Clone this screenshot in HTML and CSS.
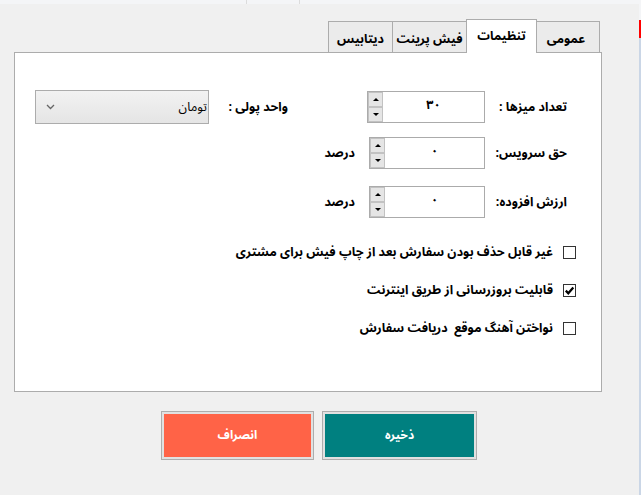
FILE: index.html
```html
<!DOCTYPE html>
<html lang="fa">
<head>
<meta charset="utf-8">
<title>تنظیمات</title>
<link rel="stylesheet" href="styles.css">
</head>
<body>
<div class="app">
  <div class="main">
    <div class="topstrip"><div class="seg seg1"></div><div class="seg seg2"></div></div>
    <div class="window">
      <div class="tabs" dir="rtl">
        <div class="tab t1">عمومی</div>
        <div class="tab t2 active">تنظیمات</div>
        <div class="tab t3">فیش پرینت</div>
        <div class="tab t4">دیتابیس</div>
      </div>
      <div class="panel" dir="rtl">
        <div class="frow row1">
          <div class="label">تعداد میزها :</div>
          <div class="num w118">
            <span class="val">۳۰</span>
            <div class="spin">
              <div class="sbtn"><span class="up"></span></div>
              <div class="sbtn"><span class="down"></span></div>
            </div>
          </div>
          <div class="label2">واحد پولی :</div>
          <div class="select">
            <span class="seltext">تومان</span>
            <svg class="chev" width="9" height="6" viewBox="0 0 9 6"><path d="M1 1 L4.5 4.5 L8 1" fill="none" stroke="#666" stroke-width="1.3"/></svg>
          </div>
        </div>
        <div class="frow row2">
          <div class="label">حق سرویس:</div>
          <div class="num w116">
            <span class="val">۰</span>
            <div class="spin">
              <div class="sbtn"><span class="up"></span></div>
              <div class="sbtn"><span class="down"></span></div>
            </div>
          </div>
          <div class="unit">درصد</div>
        </div>
        <div class="frow row3">
          <div class="label">ارزش افزوده:</div>
          <div class="num w116">
            <span class="val">۰</span>
            <div class="spin">
              <div class="sbtn"><span class="up"></span></div>
              <div class="sbtn"><span class="down"></span></div>
            </div>
          </div>
          <div class="unit">درصد</div>
        </div>
        <div class="checks">
          <div class="crow"><span class="cbox"></span><span class="ctext">غیر قابل حذف بودن سفارش بعد از چاپ فیش برای مشتری</span></div>
          <div class="crow"><span class="cbox"><svg width="11" height="11" viewBox="0 0 11 11"><path d="M1.8 5.6 L4.3 8.2 L9.3 2.6" fill="none" stroke="#000" stroke-width="2.3"/></svg></span><span class="ctext">قابلیت بروزرسانی از طریق اینترنت</span></div>
          <div class="crow"><span class="cbox"></span><span class="ctext">نواختن آهنگ موقع&nbsp; دریافت سفارش</span></div>
        </div>
      </div>
    </div>
    <div class="buttons">
      <div class="btn cancel"><div class="btn-in">انصراف</div></div>
      <div class="btn save"><div class="btn-in">ذخیره</div></div>
    </div>
  </div>
  <div class="edge"><div class="edge-top"></div><div class="edge-red"></div><div class="edge-rest"></div></div>
</div>
</body>
</html>
```
FILE: styles.css
```css
* { box-sizing: border-box; }
html, body { margin: 0; padding: 0; }
body {
  background: #f0f0f0;
  font-family: "Noto Sans Arabic", "DejaVu Sans", "Liberation Sans", sans-serif;
  font-size: 12px;
  color: #000;
  width: 641px;
  height: 495px;
  overflow: hidden;
}
.app { display: flex; width: 641px; height: 495px; }
.main { width: 639px; }
.topstrip { height: 4px; background: #f4f5f7; display: flex; }
.seg { height: 4px; border-right: 1px solid #dcdcdc; }
.seg1 { width: 247px; }
.seg2 { width: 53px; }

.window { margin-left: 14px; margin-top: 15px; width: 588px; }
.tabs {
  display: flex;
  align-items: flex-end;
  height: 33px;
  padding-right: 2px;
}
.tab {
  height: 31px;
  border: 1px solid #acacac;
  border-bottom: none;
  background: #ebebeb;
  font-weight: bold;
  font-size: 12.5px;
  display: flex;
  align-items: center;
  justify-content: center;
  padding-top: 3px;
  margin-right: -1px;
  white-space: nowrap;
}
.tab.t1 { width: 64px; margin-right: 0; padding-right: 4px; }
.tab.t2 { width: 71px; }
.tab.t3 { width: 75px; }
.tab.t4 { width: 65px; }
.tab.active {
  height: 34px;
  margin-bottom: -1px;
  background: #fff;
  position: relative;
  z-index: 2;
  padding-top: 0;
  padding-bottom: 1px;
}

.panel {
  height: 340px;
  border: 1px solid #acacac;
  background: #fff;
  padding: 37px 25px 0 19px;
}
.frow { display: flex; align-items: center; padding-right: 9px; font-weight: bold; font-size: 12.5px; }
.row2 { margin-top: 13px; }
.row3 { margin-top: 17px; }
.label { width: 82px; white-space: nowrap; }
.num {
  height: 32px;
  border: 1px solid #ababab;
  background: #fff;
  display: flex;
  align-items: stretch;
}
.w118 { width: 118px; }
.w116 { width: 116px; }
.val {
  flex: 1;
  text-align: center;
  padding-top: 6px;
  line-height: 14px;
  font-size: 12.5px;
}
.spin { width: 15px; display: flex; flex-direction: column; }
.sbtn {
  height: 15px;
  background: #e5e5e5;
  border: 1px solid #c2c2c2;
  display: flex;
  align-items: center;
  justify-content: center;
}
.up { width: 0; height: 0; border-left: 3px solid transparent; border-right: 3px solid transparent; border-bottom: 3px solid #000; }
.down { width: 0; height: 0; border-left: 3px solid transparent; border-right: 3px solid transparent; border-top: 3px solid #000; }
.label2 { margin-right: 79px; width: 56px; white-space: nowrap; }
.select {
  margin-right: 23px;
  width: 174px;
  height: 34px;
  border: 1px solid #acacac;
  background: linear-gradient(#f2f2f2, #e5e5e5);
  display: flex;
  align-items: center;
  justify-content: space-between;
  padding: 0 0 0 10px;
}
.seltext { font-weight: normal; font-size: 12.5px; padding-right: 1px; }
.chev { display: block; }
.unit { margin-right: 14px; white-space: nowrap; }

.checks { margin-top: 24px; display: flex; flex-direction: column; gap: 18px; }
.crow { display: flex; align-items: center; height: 20px; font-weight: bold; font-size: 12.5px; gap: 10px; }
.cbox {
  width: 13px; height: 13px;
  border: 1px solid #333;
  background: #fff;
  display: flex; align-items: center; justify-content: center;
}
.cbox svg { display: block; }
.ctext { white-space: nowrap; }

.buttons { display: flex; margin-top: 19px; margin-left: 161px; gap: 8px; }
.btn {
  height: 49px;
  border: 1px solid #adadad;
  background: #e1e1e1;
  padding: 2px;
}
.cancel { width: 153px; }
.save { width: 155px; }
.btn-in {
  height: 100%;
  display: flex; align-items: center; justify-content: center;
  color: #fff;
  font-weight: bold;
  font-size: 12px;
}
.cancel .btn-in { background: #ff6347; }
.save .btn-in { background: #008080; }

.edge { width: 2px; display: flex; flex-direction: column; }
.edge-top { height: 20px; background: #f4f5f7; }
.edge-red { height: 18px; background: #ff0000; }
.edge-rest { flex: 1; background: #cad6e6; }
```
